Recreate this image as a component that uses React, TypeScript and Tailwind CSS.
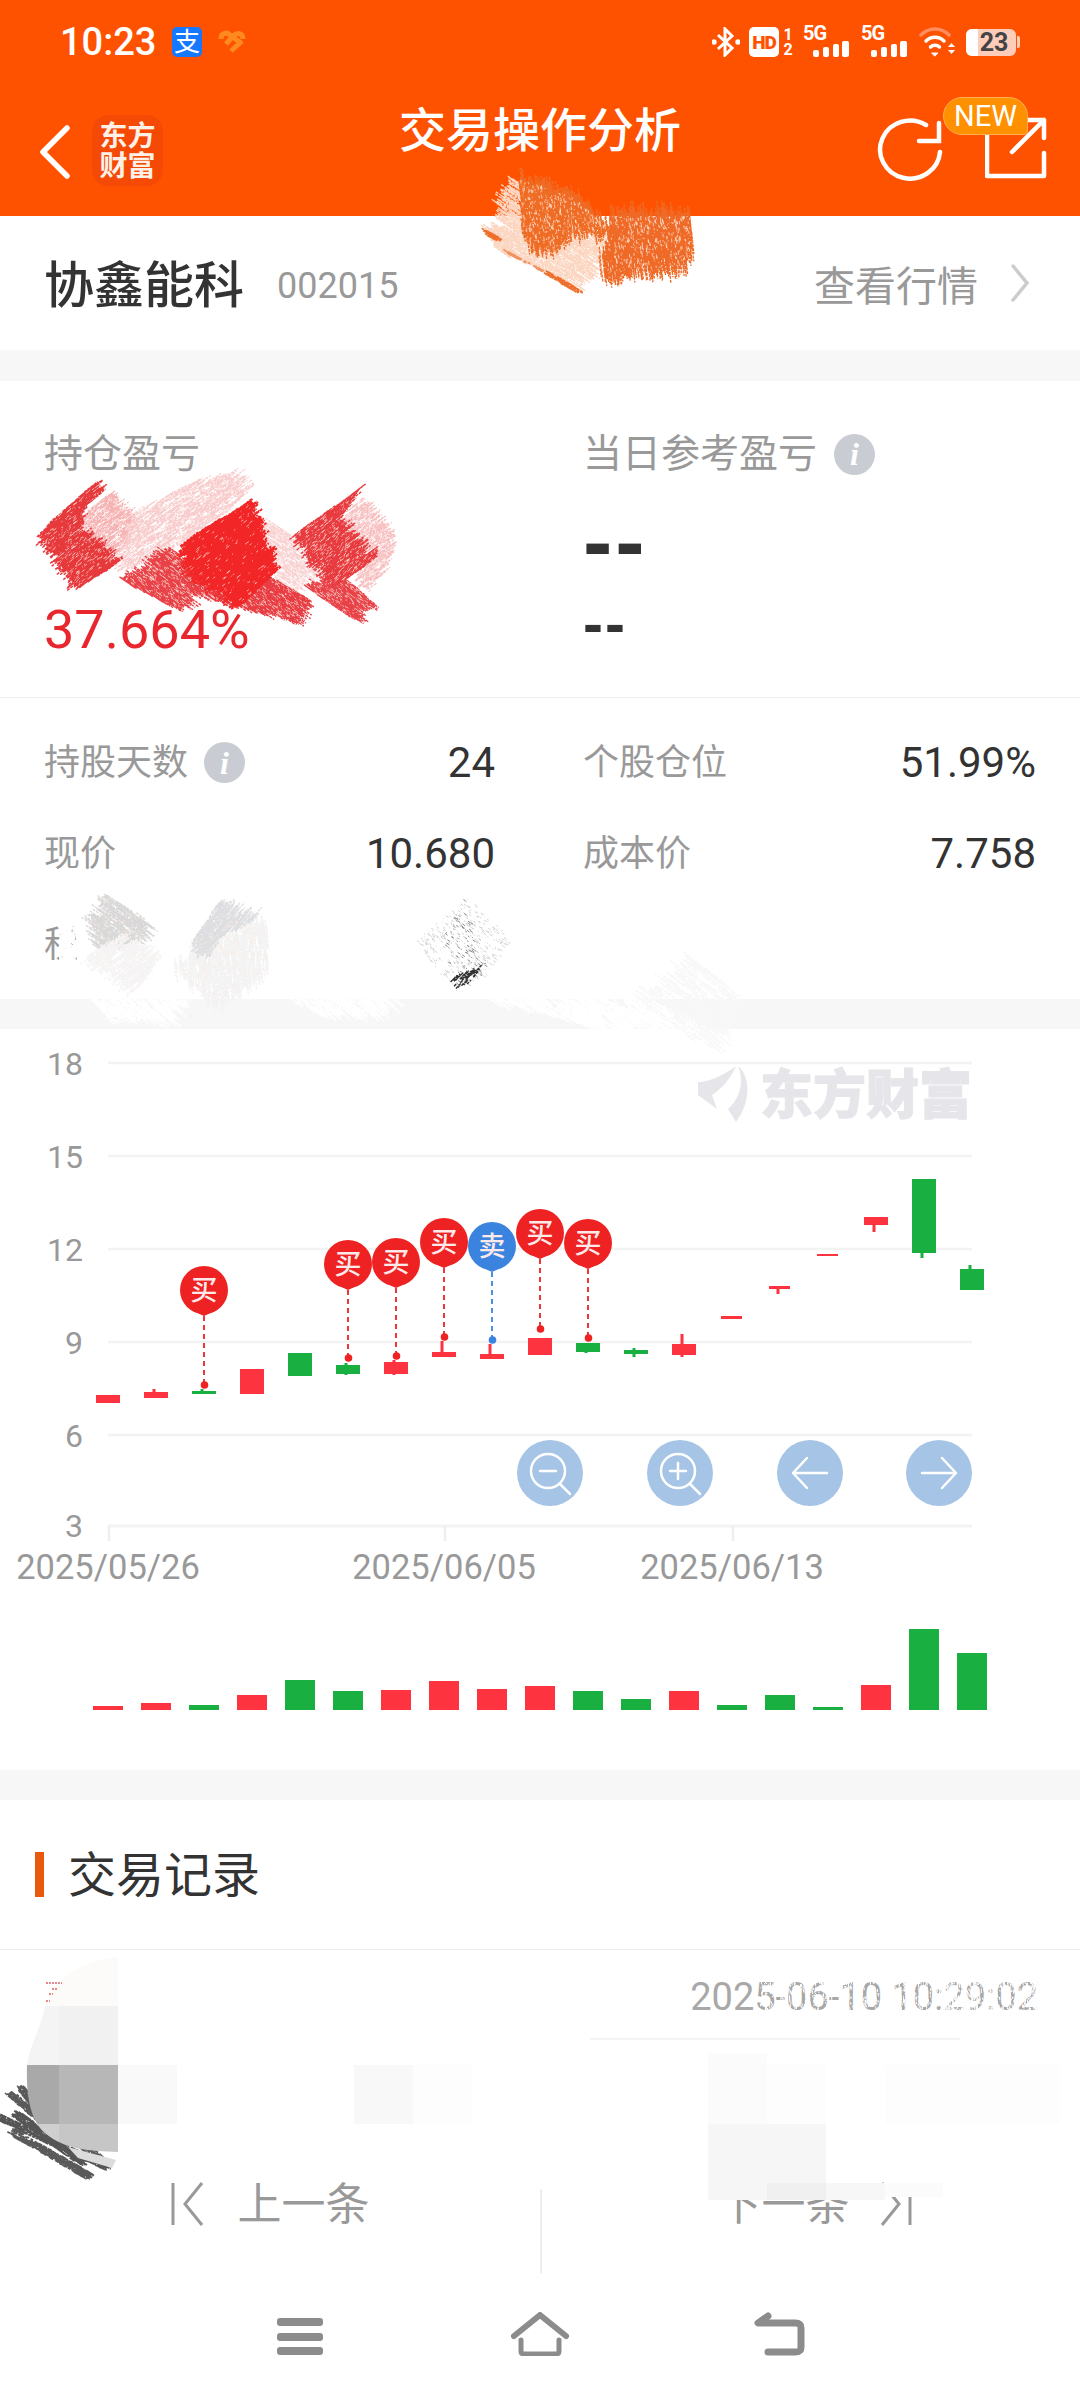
import type { ReactNode } from "react"

type Pt = [number, number]

type Patch = {
  pts: Pt[]
  color: string
  n: number
  angle: number
  len: number
  w: number
  grain?: number
}

const RED = "#fd3340"
const GREEN = "#19b041"

// [center x, body top, body bottom, wick top, wick bottom, colour]
const candles: [number, number, number, number, number, string][] = [
  [108, 1395, 1403, 1395, 1403, RED],
  [156, 1392, 1398, 1389, 1398, RED],
  [204, 1391, 1394, 1389, 1394, GREEN],
  [252, 1369, 1394, 1369, 1394, RED],
  [300, 1353, 1376, 1353, 1376, GREEN],
  [348, 1365, 1374, 1363, 1375, GREEN],
  [396, 1362, 1374, 1360, 1375, RED],
  [444, 1352, 1357, 1341, 1357, RED],
  [492, 1354, 1359, 1344, 1359, RED],
  [540, 1338, 1355, 1338, 1355, RED],
  [588, 1343, 1352, 1343, 1353, GREEN],
  [636, 1350, 1354, 1348, 1357, GREEN],
  [684, 1344, 1355, 1334, 1357, RED],
  [732, 1316, 1319, 1316, 1319, RED],
  [780, 1286, 1289, 1286, 1294, RED],
  [828, 1254, 1256, 1254, 1256, RED],
  [876, 1217, 1225, 1217, 1232, RED],
  [924, 1179, 1253, 1179, 1258, GREEN],
  [972, 1269, 1290, 1265, 1290, GREEN],
]

// [x, balloon center y, dot y, label]
const trades: [number, number, number, string][] = [
  [204, 1290, 1385, "买"],
  [348, 1264, 1358, "买"],
  [396, 1262, 1356, "买"],
  [444, 1242, 1337, "买"],
  [492, 1246, 1340, "卖"],
  [540, 1233, 1329, "买"],
  [588, 1243, 1338, "买"],
]

const volumes: [number, string][] = [
  [4, RED], [7, RED], [5, GREEN], [15, RED], [30, GREEN], [19, GREEN], [20, RED],
  [29, RED], [21, RED], [24, RED], [19, GREEN], [11, GREEN], [19, RED], [5, GREEN],
  [15, GREEN], [3, GREEN], [25, RED], [81, GREEN], [57, GREEN],
]

const axis = [
  ["18", 1063],
  ["15", 1156],
  ["12", 1249],
  ["9", 1342],
  ["6", 1435],
]

// a narrow diagonal streak between two points
const strip = (x1: number, y1: number, x2: number, y2: number, half: number, color: string, n: number): Patch => {
  const a = Math.atan2(y2 - y1, x2 - x1)
  const ox = -Math.sin(a) * half
  const oy = Math.cos(a) * half
  return {
    pts: [[x1 + ox, y1 + oy], [x2 + ox, y2 + oy], [x2 - ox, y2 - oy], [x1 - ox, y1 - oy]],
    color,
    n,
    angle: (a * 180) / Math.PI,
    len: 7,
    w: 1.6,
  }
}

const patches: Patch[] = [
  // orange smear under the header
  { pts: [[498, 203], [513, 180], [522, 183], [520, 227], [550, 247], [570, 233], [613, 237], [597, 270], [577, 292], [547, 273], [503, 253], [485, 232], [503, 225]], color: "#fbd5bf", n: 1000, angle: 35, len: 12, w: 1.3, grain: 0.4 },
  { pts: [[520, 180], [570, 195], [613, 232], [570, 233], [550, 247], [533, 247], [522, 233]], color: "#ef6c24", n: 1100, angle: 82, len: 18, w: 1.3, grain: 0.3 },
  { pts: [[610, 217], [690, 217], [693, 243], [683, 264], [653, 268], [630, 270], [607, 275], [600, 267], [610, 243]], color: "#ee6a26", n: 1300, angle: 84, len: 20, w: 1.3, grain: 0.3 },
  strip(485, 232, 498, 239, 2, "#ef6f2a", 40),
  strip(547, 273, 578, 291, 2, "#ef6f2a", 70),
  strip(503, 250, 545, 272, 1, "#f0935f", 30),
  // red smear over the profit figure
  { pts: [[80, 517], [110, 493], [140, 523], [117, 560], [80, 530]], color: "#f6b3b3", n: 700, angle: -35, len: 10, w: 1.1, grain: 0.5 },
  { pts: [[137, 510], [193, 483], [237, 472], [250, 487], [230, 510], [190, 537], [163, 557], [123, 570], [117, 560]], color: "#f8cccc", n: 1100, angle: -35, len: 12, w: 1.1, grain: 0.6 },
  { pts: [[247, 543], [270, 520], [337, 567], [290, 593]], color: "#f9d2d2", n: 650, angle: 35, len: 12, w: 1.1, grain: 0.6 },
  { pts: [[335, 523], [363, 497], [395, 540], [383, 573], [370, 593], [357, 573], [373, 560]], color: "#f7bfbf", n: 650, angle: -35, len: 10, w: 1.1, grain: 0.6 },
  { pts: [[42, 530], [93, 485], [102, 493], [80, 510], [80, 530], [117, 563], [80, 587], [49, 547]], color: "#e7383b", n: 1400, angle: -38, len: 14, w: 1.4, grain: 0.2 },
  { pts: [[127, 583], [173, 550], [197, 573], [190, 600], [177, 608]], color: "#e84248", n: 850, angle: 35, len: 15, w: 1.3, grain: 0.35 },
  { pts: [[190, 593], [217, 577], [270, 577], [310, 600], [293, 620], [243, 607]], color: "#e83d43", n: 1100, angle: 35, len: 15, w: 1.3, grain: 0.35 },
  { pts: [[310, 590], [340, 573], [373, 603], [355, 620]], color: "#e84248", n: 520, angle: 35, len: 14, w: 1.3, grain: 0.35 },
  { pts: [[297, 533], [357, 490], [337, 523], [373, 560], [340, 583], [317, 560]], color: "#e83b3f", n: 1100, angle: -38, len: 16, w: 1.3, grain: 0.3 },
  { pts: [[187, 540], [248, 503], [273, 573], [243, 603], [190, 570]], color: "#f22626", n: 2600, angle: -38, len: 16, w: 1.8, grain: 0.05 },
  // grey smears over the last stats row
  { pts: [[60, 925], [88, 925], [88, 965], [60, 965]], color: "#ffffff", n: 420, angle: 80, len: 10, w: 1.3 },
  { pts: [[89, 923], [107, 895], [152, 923], [147, 937], [129, 947], [94, 947]], color: "#d8d8d8", n: 520, angle: 35, len: 12, w: 1.2, grain: 0.3 },
  { pts: [[85, 957], [125, 933], [160, 957], [134, 993]], color: "#f5f5f5", n: 420, angle: -40, len: 12, w: 1.4, grain: 0.3 },
  { pts: [[172, 967], [219, 930], [268, 923], [268, 970], [219, 1007], [205, 997]], color: "#f3f3f3", n: 800, angle: 85, len: 14, w: 1.4, grain: 0.3 },
  { pts: [[192, 943], [219, 902], [259, 917], [219, 937], [210, 957]], color: "#dcdee1", n: 440, angle: -50, len: 12, w: 1.2, grain: 0.3 },
  { pts: [[415, 940], [469, 898], [513, 940], [486, 977], [455, 993]], color: "#d2d2d2", n: 420, angle: 35, len: 2.5, w: 1 },
  { pts: [[440, 940], [465, 900], [490, 975], [458, 992]], color: "#8e8e8e", n: 110, angle: 35, len: 3, w: 1 },
  { pts: [[452, 978], [484, 965], [462, 992], [453, 993]], color: "#333333", n: 45, angle: -45, len: 6, w: 1.4 },
  // faint wisps crossing the grey band
  { pts: [[93, 999], [190, 999], [170, 1022], [110, 1022]], color: "#ffffff", n: 260, angle: 40, len: 14, w: 1.6 },
  { pts: [[290, 999], [400, 999], [380, 1015], [320, 1015]], color: "#ffffff", n: 180, angle: 40, len: 14, w: 1.6 },
  { pts: [[486, 999], [650, 999], [710, 1029], [600, 1029]], color: "#ffffff", n: 520, angle: 35, len: 16, w: 1.6 },
  { pts: [[640, 1000], [690, 955], [745, 1000], [720, 1050], [690, 1040]], color: "#f8f8f8", n: 320, angle: 40, len: 14, w: 1.6 },
  // scratches across the trade time
  { pts: [[760, 1978], [1040, 1978], [1040, 2014], [760, 2014]], color: "#ffffff", n: 900, angle: 85, len: 4, w: 1 },
  { pts: [[885, 1978], [1040, 1978], [1040, 2014], [885, 2014]], color: "#ffffff", n: 550, angle: 85, len: 5, w: 1 },
  // dark streaks next to the first trade row
  strip(0, 2118, 107, 2167, 3.5, "#555555", 340),
  strip(13, 2132, 90, 2177, 4, "#5a5a5a", 300),
  strip(10, 2093, 67, 2143, 3.5, "#5a5a5a", 240),
  strip(20, 2087, 55, 2130, 3.5, "#5a5a5a", 180),
  strip(15, 2113, 83, 2163, 4, "#555555", 300),
  strip(40, 2105, 100, 2160, 4.5, "#5c5c5c", 300),
]

const rng = (seed: number) => () => {
  seed = (seed + 0x6d2b79f5) | 0
  let t = Math.imul(seed ^ (seed >>> 15), 1 | seed)
  t = (t + Math.imul(t ^ (t >>> 7), 61 | t)) ^ t
  return ((t ^ (t >>> 14)) >>> 0) / 4294967296
}

const inside = (pts: Pt[], x: number, y: number) => {
  let hit = false
  for (let i = 0, j = pts.length - 1; i < pts.length; j = i++) {
    const [xi, yi] = pts[i]
    const [xj, yj] = pts[j]
    if (yi > y !== yj > y && x < ((xj - xi) * (y - yi)) / (yj - yi) + xi) hit = !hit
  }
  return hit
}

const hatch = (pts: Pt[], n: number, angle: number, len: number, seed: number) => {
  const rand = rng(seed)
  const xs = pts.map((p) => p[0])
  const ys = pts.map((p) => p[1])
  const minX = Math.min(...xs)
  const minY = Math.min(...ys)
  const w = Math.max(...xs) - minX
  const h = Math.max(...ys) - minY
  const dx = Math.cos((angle * Math.PI) / 180)
  const dy = Math.sin((angle * Math.PI) / 180)
  let d = ""
  let placed = 0
  let tries = 0
  while (placed < n && tries < n * 30) {
    tries++
    const x = minX + rand() * w
    const y = minY + rand() * h
    if (!inside(pts, x, y)) continue
    const r = rand()
    const l = (len * (0.3 + 1.5 * r * r)) / 2
    d += `M${(x - dx * l).toFixed(1)} ${(y - dy * l).toFixed(1)}L${(x + dx * l).toFixed(1)} ${(y + dy * l).toFixed(1)}`
    placed++
  }
  return d
}

// Mosaic blocks and hand smears that sit on top of the page
const Smears = () => (
  <svg
    className="pointer-events-none absolute top-0 left-0"
    width={1080}
    height={2400}
    viewBox="0 0 1080 2400"
    fill="none"
  >
    <defs>
      <clipPath id="mosaic-edge">
        <path d="M118 1957C85 1960 55 1975 45 2006C40 2030 30 2045 27 2065C26 2095 30 2120 45 2133C65 2150 90 2151 118 2152Z" />
      </clipPath>
    </defs>
    {patches.map((patch, i) => (
      <g key={i}>
        <path d={hatch(patch.pts, patch.n, patch.angle, patch.len, i * 97 + 11)} stroke={patch.color} strokeWidth={patch.w} strokeDasharray="3 1" />
        {patch.grain && (
          <path
            d={hatch(patch.pts, Math.round(patch.n * patch.grain), patch.angle, 2.5, i * 131 + 7)}
            stroke={patch.grain > 0.45 ? "#ffffff" : "#ffe9e0"}
            strokeOpacity={0.7}
            strokeWidth={1}
          />
        )}
      </g>
    ))}
    <path d="M68 2147L116 2160L112 2168L78 2158Z" fill="#dcdcdc" />
    <g clipPath="url(#mosaic-edge)">
      <rect x={20} y={1955} width={98} height={51} fill="#fdfbf9" />
      <rect x={20} y={2006} width={39} height={59} fill="#f4f4f4" />
      <rect x={59} y={2006} width={59} height={59} fill="#f1f1f1" />
      <rect x={20} y={2065} width={39} height={59} fill="#a9a9a9" />
      <rect x={59} y={2065} width={59} height={59} fill="#b7b7b7" />
      <rect x={20} y={2124} width={39} height={30} fill="#cfcfcf" />
      <rect x={59} y={2124} width={59} height={30} fill="#c6c6c6" />
    </g>
    <path d="M46 1983H62M52 1989H57M49 1994H53M46 2001H50" stroke="#e58a8a" strokeWidth={2} strokeDasharray="2 1" />
    <rect x={118} y={2065} width={59} height={59} fill="#f9f9f9" />
    <rect x={354} y={2065} width={59} height={59} fill="#f8f8f8" />
    <rect x={413} y={2065} width={59} height={59} fill="#fdfdfd" />
    <rect x={708} y={2053} width={59} height={71} fill="#fbfbfb" />
    <rect x={767} y={2065} width={59} height={59} fill="#fdfdfd" />
    <rect x={885} y={2065} width={175} height={59} fill="#fdfdfd" />
    <rect x={708} y={2124} width={118} height={76} fill="#f6f6f6" />
    <rect x={767} y={2183} width={59} height={17} fill="#f0f0f0" />
    <rect x={826} y={2183} width={59} height={17} fill="#f7f7f7" />
    <rect x={885} y={2183} width={58} height={14} fill="#fbfbfb" />
    <path d="M590 2039H960" stroke="#f0f0f0" strokeWidth={1.5} />
  </svg>
)

const InfoDot = ({ className = "" }: { className?: string }) => (
  <span
    className={`flex h-[41px] w-[41px] items-center justify-center rounded-full bg-[#c9cdd3] font-['Liberation_Serif',serif] text-[32px] font-bold text-white italic ${className}`}
  >
    i
  </span>
)

const Stat = ({ label, value, info }: { label: string; value?: string; info?: boolean }) => (
  <div className="flex h-[91px] items-center justify-between">
    <div className="flex items-center">
      <span className="text-[36px] leading-[40px] text-[#999999]">{label}</span>
      {info && <InfoDot className="ml-[16px]" />}
    </div>
    {value && <span className="text-[42px] leading-[46px] text-[#333333]">{value}</span>}
  </div>
)

const Bars = () => (
  <svg width={36} height={17} viewBox="0 0 36 17" fill="white">
    <rect x={0} y={9} width={6} height={7} rx={2} />
    <rect x={10} y={6} width={6} height={10} rx={2} />
    <rect x={20} y={3} width={6} height={13} rx={2} />
    <rect x={29} y={0} width={7} height={16} rx={2} />
  </svg>
)

const Signal = ({ className = "" }: { className?: string }) => (
  <div className={`flex h-[30px] w-[46px] flex-col ${className}`}>
    <span className="h-[13px] text-[20px] leading-[13px] font-bold tracking-[-1px] text-white">5G</span>
    <span className="mt-[1px] ml-[10px] block h-[17px]">
      <Bars />
    </span>
  </div>
)

const StatusBar = () => (
  <div className="flex h-[84px] items-center pr-[60px] pl-[60px]">
    <span className="w-[95px] text-[38px] leading-[40px] font-medium text-white">10:23</span>
    <span className="ml-[17px] flex h-[30px] w-[30px] items-center justify-center rounded-[5px] bg-[#1677ff] text-[26px] leading-[30px] text-white">
      支
    </span>
    <svg className="ml-[16px]" width={28} height={24} viewBox="0 0 28 24" fill="none" stroke="#ff8a1e" strokeWidth={5}>
      <path d="M3 9C3 3 9 1 13 6L23 13M25 9C25 3 19 2 15 6L8 14M13 21L24 11" />
    </svg>
    <div className="ml-auto flex items-center">
      <svg width={28} height={30} viewBox="0 0 28 30" fill="none" stroke="white" strokeWidth={3}>
        <path d="M6 8L20 21L13 28V2L20 9L6 22" />
        <circle cx={2} cy={15} r={1.2} fill="white" />
        <circle cx={26} cy={15} r={1.2} fill="white" />
      </svg>
      <span className="ml-[9px] flex h-[30px] w-[30px] items-center justify-center overflow-hidden rounded-[5px] bg-white text-[19px] leading-none font-black tracking-[-1px] text-[#ff5200]">
        HD
      </span>
      <span className="ml-[4px] flex w-[10px] flex-col text-center text-[16px] leading-[15px] font-bold text-white">
        <span>1</span>
        <span>2</span>
      </span>
      <Signal className="ml-[10px]" />
      <Signal className="ml-[12px]" />
      <svg className="ml-[12px]" width={37} height={30} viewBox="0 0 37 30" fill="none" strokeLinecap="round">
        <path d="M2 8C10 0 22 0 30 8" stroke="#ff8d62" strokeWidth={3.500} />
        <path d="M7 14C12 9 20 9 25 14" stroke="white" strokeWidth={3.500} />
        <path d="M11.500 20C14 17.500 18 17.500 20.500 20" stroke="white" strokeWidth={3.500} />
        <path d="M13 26H19L16 29Z" fill="white" stroke="white" />
        <path d="M29 20L32.500 16L36 20ZM29 23L32.500 27L36 23Z" fill="white" />
      </svg>
      <div className="relative ml-[10px] flex h-[27px] w-[50px] overflow-hidden rounded-[6px] bg-[#fdcdb9]">
        <span className="h-full w-[12px] bg-white" />
        <span className="absolute inset-0 flex items-center justify-center pl-[6px] text-[25px] leading-none font-bold text-[#444444]">
          23
        </span>
      </div>
      <span className="ml-[1px] h-[12px] w-[3px] rounded-r-[2px] bg-[#fdcdb9]" />
    </div>
  </div>
)

const NavBar = () => (
  <div className="grid h-[132px] grid-cols-[1fr_auto_1fr]">
    <div className="flex items-start pt-[31px] pl-[40px]">
      <svg className="mt-[10px]" width={30} height={54} viewBox="0 0 30 54" fill="none" stroke="white" strokeWidth={5.500} strokeLinecap="round" strokeLinejoin="round">
        <path d="M27 3L3 27L27 51" />
      </svg>
      <span className="ml-[22px] flex h-[71px] w-[71px] flex-col items-center justify-center rounded-[16px] bg-[#f54a06] pt-[2px] text-[28px] leading-[30px] font-bold text-[#fff1e8]">
        <span>东方</span>
        <span>财富</span>
      </span>
    </div>
    <h1 className="pt-[20px] text-[47px] leading-[54px] font-medium text-white">交易操作分析</h1>
    <div className="flex items-start justify-end pt-[33px] pr-[33px]">
      <svg width={70} height={68} viewBox="875 116 70 68" fill="none" stroke="white" strokeWidth={4.500} strokeLinecap="round">
        <path d="M939 151A30 29 0 1 1 925 124" />
        <path d="M938 122V140H918" />
      </svg>
      <svg className="ml-[39px]" width={62} height={62} viewBox="985 119 62 62" fill="none" stroke="white" strokeWidth={4.500} strokeLinecap="round" strokeLinejoin="round">
        <path d="M1044 155V178H987V135" />
        <path d="M1012 154L1044 122M1026 122H1044V140" />
      </svg>
    </div>
  </div>
)

const ChartButton = ({ cx, children }: { cx: number; children: ReactNode }) => (
  <g>
    <circle cx={cx} cy={1473} r={33} fill="#a6c4e5" />
    <g fill="none" stroke="white" strokeWidth={2.500} strokeLinecap="round" strokeLinejoin="round">
      {children}
    </g>
  </g>
)

const Candles = () => (
  <svg className="block" width={1080} height={741} viewBox="0 1029 1080 741">
    {axis.map(([label, y]) => (
      <g key={label}>
        <line x1={108} x2={972} y1={Number(y)} y2={Number(y)} stroke="#f3f3f3" strokeWidth={2.500} />
        <text x={83} y={Number(y) + 12} textAnchor="end" fontSize={32} fill="#999999">
          {label}
        </text>
      </g>
    ))}
    <line x1={108} x2={972} y1={1526} y2={1526} stroke="#f3f3f3" strokeWidth={3} />
    <text x={83} y={1537} textAnchor="end" fontSize={32} fill="#999999">
      3
    </text>
    {[
      ["2025/05/26", 108],
      ["2025/06/05", 444],
      ["2025/06/13", 732],
    ].map(([label, x]) => (
      <g key={label}>
        <line x1={Number(x) + 1} x2={Number(x) + 1} y1={1526} y2={1541} stroke="#efefef" strokeWidth={2.500} />
        <text x={Number(x)} y={1579} textAnchor="middle" fontSize={34.500} fill="#999999">
          {label}
        </text>
      </g>
    ))}

    {/* watermark */}
    <path d="M698 1082C712 1082 728 1072 736 1066C730 1080 720 1090 712 1095L717 1109L698 1095Z" fill="#e6e6ea" />
    <path d="M738 1066C750 1076 752 1100 736 1122L728 1109C741 1098 744 1080 738 1066Z" fill="#e6e6ea" />
    <text x={760} y={1114} fontSize={53} fontWeight={900} fill="#e6e6ea" stroke="#e6e6ea" strokeWidth={1}>
      东方财富
    </text>

    {candles.map(([x, top, bottom, wickTop, wickBottom, color], i) => {
      const thin = bottom - top <= 3 && i > 2
      return (
        <g key={x} fill={color}>
          <rect x={x - 3.500} y={wickTop} width={3} height={wickBottom - wickTop} />
          <rect x={thin ? x - 11 : x - 12} y={top} width={thin ? 21 : 24} height={bottom - top} />
        </g>
      )
    })}

    {trades.map(([x, y, dotY, label]) => {
      const tone = label === "卖" ? "#3a84e0" : "#ee2222"
      return (
        <g key={x}>
          <line x1={x} x2={x} y1={y + 26} y2={dotY} stroke={tone} strokeWidth={1.800} strokeDasharray="5 4" />
          <circle cx={x + 0.5} cy={dotY} r={3.800} fill={tone} />
          <circle cx={x} cy={y} r={24} fill={tone} />
          <path d={`M${x - 11} ${y + 21}H${x + 11}L${x} ${y + 26}Z`} fill={tone} />
          <text x={x} y={y + 10} textAnchor="middle" fontSize={27} fontWeight={500} fill="#fde9e9">
            {label}
          </text>
        </g>
      )
    })}

    <ChartButton cx={550}>
      <circle cx={548} cy={1471} r={17} />
      <path d="M540 1471H556M560 1484L570 1494" />
    </ChartButton>
    <ChartButton cx={680}>
      <circle cx={678} cy={1471} r={17} />
      <path d="M670 1471H686M678 1463V1479M690 1484L700 1494" />
    </ChartButton>
    <ChartButton cx={810}>
      <path d="M793 1473H827M807 1458L793 1473L807 1488" />
    </ChartButton>
    <ChartButton cx={939}>
      <path d="M922 1473H956M942 1458L956 1473L942 1488" />
    </ChartButton>

    {volumes.map(([h, color], i) => (
      <rect key={i} x={93 + i * 48} y={1710 - h} width={30} height={h} fill={color} />
    ))}
  </svg>
)

const Band = () => <div className="h-[30px] bg-[#f7f7f7]" />

const App = () => (
  <div className="relative h-[2400px] w-[1080px] overflow-hidden bg-white font-['Roboto','Noto_Sans_CJK_SC',sans-serif]">
    <header className="h-[216px] bg-[#ff5200]">
      <StatusBar />
      <NavBar />
    </header>

    <div className="flex h-[134px] items-center pr-[50px] pl-[44px]">
      <span className="pt-[6px] text-[50px] leading-[60px] font-medium text-[#333333]">协鑫能科</span>
      <span className="ml-[33px] pt-[6px] text-[36px] leading-[44px] text-[#999999]">002015</span>
      <span className="ml-auto pt-[8px] text-[41px] leading-[50px] text-[#999999]">查看行情</span>
      <svg className="ml-[32px]" width={20} height={40} viewBox="0 0 20 40" fill="none" stroke="#cccccc" strokeWidth={3.500} strokeLinecap="round">
        <path d="M3 3L17 20L3 37" />
      </svg>
    </div>
    <div className="h-[31px] bg-[#f7f7f7]" />

    <section className="h-[618px]">
      <div className="grid h-[317px] grid-cols-[539px_1fr] border-b border-[#eeeeee] pt-[50px] pl-[44px]">
        <div>
          <p className="text-[39px] leading-[46px] text-[#999999]">持仓盈亏</p>
          <p className="mt-[123px] text-[54px] leading-[60px] text-[#e8262d]">37.664%</p>
        </div>
        <div>
          <div className="flex items-center">
            <span className="text-[39px] leading-[46px] text-[#999999]">当日参考盈亏</span>
            <InfoDot className="ml-[17px]" />
          </div>
          <p className="mt-[28px] font-['Liberation_Sans',sans-serif] text-[88px] leading-[72px] font-bold tracking-[3px] text-[#333333]">--</p>
          <p className="mt-[17px] font-['Liberation_Sans',sans-serif] text-[60px] leading-[60px] font-bold tracking-[2px] text-[#333333]">--</p>
        </div>
      </div>
      <div className="grid grid-cols-[451px_453px] gap-x-[88px] pt-[19px] pl-[44px]">
        <Stat label="持股天数" value="24" info />
        <Stat label="个股仓位" value="51.99%" />
        <Stat label="现价" value="10.680" />
        <Stat label="成本价" value="7.758" />
        <Stat label="税" />
      </div>
    </section>
    <Band />

    <Candles />
    <Band />

    <div className="flex h-[150px] items-start border-b border-[#ececec] pt-[52px] pl-[35px]">
      <span className="h-[45px] w-[9px] bg-[#e8590c]" />
      <h2 className="mt-[1px] ml-[24px] text-[48px] leading-[46px] text-[#333333]">交易记录</h2>
    </div>

    <div className="flex h-[230px] justify-end pt-[25px] pr-[42px]">
      <span className="text-[38px] leading-[44px] text-[#a8a8a8]">2025-06-10 10:29:02</span>
    </div>

    <div className="flex h-[120px] items-start">
      <div className="flex h-[93px] w-[540px] items-start justify-center pt-[3px]">
        <svg className="mt-[-1px]" width={34} height={44} viewBox="0 0 34 44" fill="none" stroke="#999999" strokeWidth={3}>
          <path d="M2 1V43M31 1L14 22L31 43" />
        </svg>
        <span className="ml-[33px] text-[44px] leading-[44px] text-[#999999]">上一条</span>
      </div>
      <span className="mt-[9px] h-[84px] w-[2px] bg-[#eeeeee]" />
      <div className="flex h-[93px] flex-1 items-start justify-center pt-[3px] pl-[8px]">
        <span className="text-[44px] leading-[44px] text-[#999999]">下一条</span>
        <svg className="mt-[-1px] ml-[29px]" width={34} height={44} viewBox="0 0 34 44" fill="none" stroke="#999999" strokeWidth={3}>
          <path d="M31 1V43M3 43L20 22L3 1" />
        </svg>
      </div>
    </div>

    <nav className="flex h-[100px] items-start pt-[12px]">
      <svg className="ml-[277px] mt-[6px]" width={46} height={38} viewBox="0 0 46 38" fill="#8c8c8c">
        <rect x={0} y={0} width={46} height={8} rx={3} />
        <rect x={0} y={15} width={46} height={8} rx={3} />
        <rect x={0} y={29} width={46} height={8} rx={3} />
      </svg>
      <svg className="ml-[187px]" width={60} height={44} viewBox="0 0 60 44" fill="none" stroke="#8c8c8c" strokeLinecap="round" strokeLinejoin="round">
        <path d="M4 24L30 3L56 24" strokeWidth={6} />
        <path d="M11 28V39C11 41 12 42 14 42H46C48 42 49 41 49 39V28" strokeWidth={5} />
      </svg>
      <svg className="ml-[184px]" width={52} height={44} viewBox="0 0 52 44" fill="none" stroke="#8c8c8c" strokeWidth={7} strokeLinecap="round" strokeLinejoin="round">
        <path d="M14 4L4 11H41C45 11 47 12 47 16V35C47 39 45 40 41 40H14" />
      </svg>
    </nav>

    <Smears />

    {/* badge over the share icon */}
    <span className="absolute top-[97px] left-[943px] flex h-[38px] w-[85px] items-center justify-center rounded-[19px] rounded-br-[4px] border border-[#ffb050] bg-[#ff9000] text-[29px] leading-none text-white">
      NEW
    </span>
  </div>
)

export default App
